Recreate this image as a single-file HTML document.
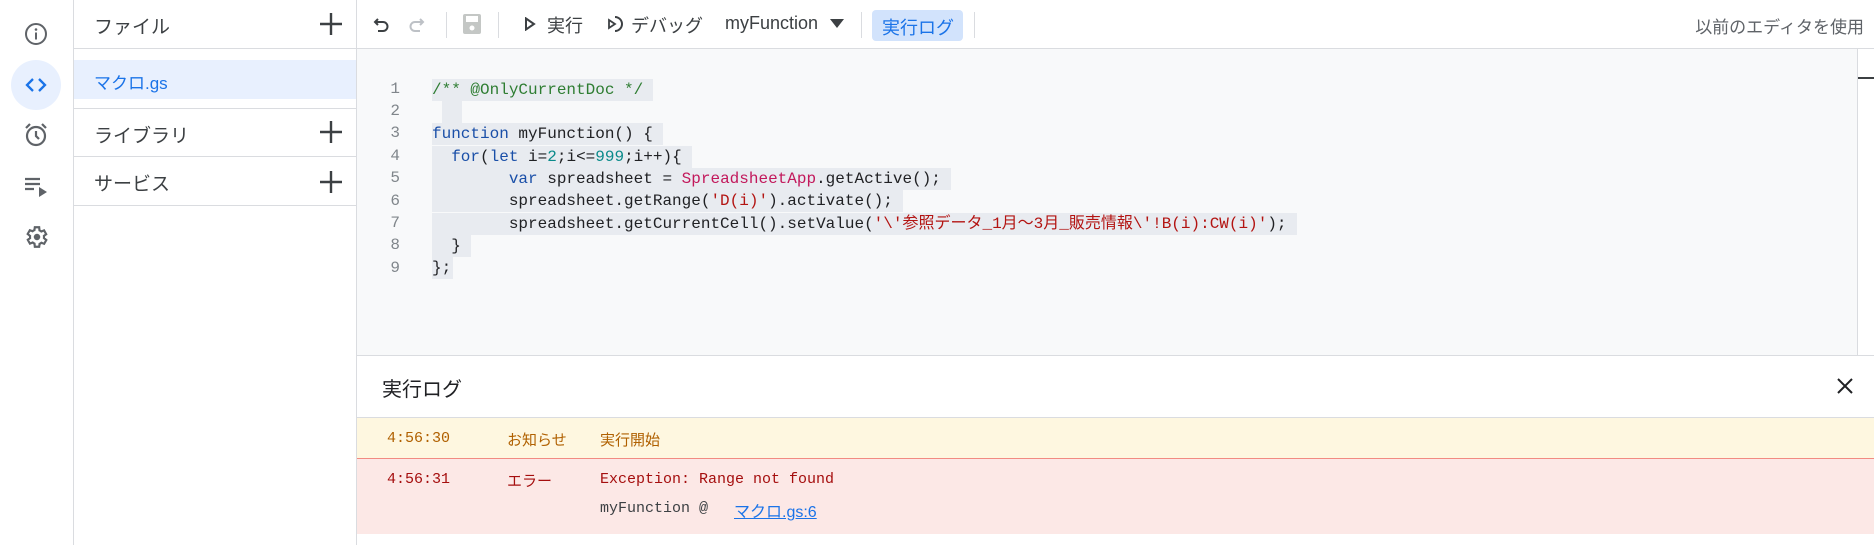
<!DOCTYPE html>
<html><head><meta charset="utf-8"><style>
*{box-sizing:border-box;margin:0;padding:0}
body{width:1874px;height:545px;overflow:hidden;background:#fff;font-family:"Liberation Sans","Noto Sans CJK JP",sans-serif;position:relative;color:#3c4043}
.abs{position:absolute}
.mono{font-family:"Liberation Mono","Noto Sans CJK JP",monospace}
.ic{position:absolute;left:24px}
.row{position:absolute;left:74px;width:282px;border-bottom:1px solid #dadce0;font-size:19px;color:#3c4043}
.plus{position:absolute;left:320px}
.sep{position:absolute;top:12px;width:1px;height:26px;background:#dadce0}
.ln{position:absolute;left:380px;width:20px;text-align:right;font-size:16px;color:#80868b;font-family:"Liberation Mono",monospace}
.cl{position:absolute;left:432px;font-size:16px;line-height:22px;height:22px;white-space:pre;background:#e8ebf0;color:#202124;padding-right:10px}
.kw{color:#1a4fa8}.cm{color:#2e7d32}.st{color:#b31412}.nm{color:#0a8a8a}.cls{color:#c2185b}
</style></head><body>
<!-- rail -->
<div class="abs" style="left:73px;top:0;width:1px;height:545px;background:#dadce0"></div>
<svg class="ic" style="top:22px" width="24" height="24" viewBox="0 0 24 24"><circle cx="12" cy="12" r="10" fill="none" stroke="#5f6368" stroke-width="2"/><rect x="11" y="10.5" width="2" height="7" fill="#5f6368"/><circle cx="12" cy="7.5" r="1.3" fill="#5f6368"/></svg>
<div class="abs" style="left:11px;top:60px;width:50px;height:50px;border-radius:50%;background:#e8f0fe"></div>
<svg class="ic" style="top:73px" width="24" height="24" viewBox="0 0 24 24"><path d="M9 6l-6 6 6 6M15 6l6 6-6 6" fill="none" stroke="#1a73e8" stroke-width="2.3"/></svg>
<svg class="ic" style="top:122px" width="24" height="26" viewBox="0 0 24 26"><circle cx="12" cy="14" r="9" fill="none" stroke="#5f6368" stroke-width="2.2"/><path d="M12 9v5l3 3M2 6l4-4M22 6l-4-4" fill="none" stroke="#5f6368" stroke-width="2.2"/></svg>
<svg class="ic" style="top:175px" width="26" height="24" viewBox="0 0 26 24"><path d="M1 4h15M1 9h15M1 14h9" stroke="#5f6368" stroke-width="2.2"/><path d="M15 12l8 5-8 5z" fill="#5f6368"/></svg>
<svg class="ic" style="top:224px" width="26" height="26" viewBox="0 0 24 24"><path d="M19.4 13a7.5 7.5 0 000-2l2.1-1.6-2-3.5-2.5 1a7 7 0 00-1.7-1L15 3h-4l-.4 2.7a7 7 0 00-1.7 1l-2.5-1-2 3.5L6.6 11a7.5 7.5 0 000 2l-2.1 1.6 2 3.5 2.5-1a7 7 0 001.7 1L11 21h4l.4-2.7a7 7 0 001.7-1l2.5 1 2-3.5z" transform="translate(-1 0)" fill="none" stroke="#5f6368" stroke-width="2"/><circle cx="12" cy="12" r="3" fill="#5f6368"/></svg>
<!-- files panel -->
<div class="abs" style="left:356px;top:0;width:1px;height:545px;background:#dadce0"></div>
<div class="row" style="top:0;height:49px"><span class="abs" style="left:20px;top:12px">ファイル</span></div>
<svg class="abs" style="left:320px;top:13px" width="22" height="22"><path d="M11 0v22M0 11h22" stroke="#3c4043" stroke-width="2.4"/></svg>
<div class="abs" style="left:74px;top:60px;width:282px;height:39px;background:#e8f0fe;color:#1a73e8;font-size:17px;padding:9px 0 0 20px">マクロ.gs</div>
<div class="row" style="top:108px;height:49px;border-top:1px solid #dadce0"><span class="abs" style="left:20px;top:12px">ライブラリ</span></div>
<svg class="abs" style="left:320px;top:121px" width="22" height="22"><path d="M11 0v22M0 11h22" stroke="#3c4043" stroke-width="2.4"/></svg>
<div class="row" style="top:157px;height:49px"><span class="abs" style="left:20px;top:12px">サービス</span></div>
<svg class="abs" style="left:320px;top:171px" width="22" height="22"><path d="M11 0v22M0 11h22" stroke="#3c4043" stroke-width="2.4"/></svg>
<!-- toolbar -->
<div class="abs" style="left:357px;top:48px;width:1517px;height:1px;background:#dadce0"></div>
<svg class="abs" style="left:372px;top:14px" width="20" height="20" viewBox="0 0 20 20"><path d="M6 5L3 8l3 3M3 8h8a4.5 4.5 0 010 9H6" fill="none" stroke="#3c4043" stroke-width="2"/></svg>
<svg class="abs" style="left:406px;top:14px" width="20" height="20" viewBox="0 0 20 20"><path d="M14 5l3 3-3 3M17 8H9a4.5 4.5 0 000 9h5" fill="none" stroke="#bdc1c6" stroke-width="2"/></svg>
<div class="sep" style="left:446px"></div>
<svg class="abs" style="left:462px;top:13px" width="20" height="22" viewBox="0 0 20 22"><rect x="1" y="1" width="18" height="20" rx="2" fill="#c4c7c5"/><rect x="4" y="3" width="12" height="6" fill="#fff"/><circle cx="10" cy="15" r="2.5" fill="#fff"/></svg>
<div class="sep" style="left:498px"></div>
<svg class="abs" style="left:524px;top:17px" width="12" height="14" viewBox="0 0 12 14"><path d="M2 1.5l8 5.5-8 5.5z" fill="none" stroke="#3c4043" stroke-width="2"/></svg>
<span class="abs" style="left:547px;top:12px;font-size:18px">実行</span>
<svg class="abs" style="left:607px;top:14px" width="20" height="20" viewBox="0 0 20 20"><path d="M8 3a7 7 0 110 14" fill="none" stroke="#3c4043" stroke-width="2"/><path d="M2 6l6 4-6 4z" fill="none" stroke="#3c4043" stroke-width="1.8"/></svg>
<span class="abs" style="left:631px;top:12px;font-size:18px">デバッグ</span>
<span class="abs" style="left:725px;top:13px;font-size:18px;color:#3c4043">myFunction</span>
<svg class="abs" style="left:830px;top:19px" width="14" height="10"><path d="M0 0h14L7 9z" fill="#3c4043"/></svg>
<div class="sep" style="left:861px"></div>
<div class="abs" style="left:872px;top:10px;width:91px;height:31px;background:#d2e3fc;border-radius:4px;color:#1a73e8;font-size:18px;padding:4px 0 0 10px">実行ログ</div>
<div class="sep" style="left:974px"></div>
<span class="abs" style="right:10px;top:13px;font-size:17px;color:#5f6368">以前のエディタを使用</span>
<!-- editor -->
<div class="abs" style="left:357px;top:49px;width:1501px;height:306px;background:#f8f9fa"></div>
<div class="abs" style="left:1857px;top:49px;width:1px;height:306px;background:#dadce0"></div>
<div class="abs" style="left:1858px;top:77px;width:16px;height:2px;background:#3c4043"></div>
<div class="ln" style="top:80px">1</div><div class="ln" style="top:102px">2</div><div class="ln" style="top:124px">3</div><div class="ln" style="top:147px">4</div><div class="ln" style="top:169px">5</div><div class="ln" style="top:192px">6</div><div class="ln" style="top:214px">7</div><div class="ln" style="top:236px">8</div><div class="ln" style="top:259px">9</div>
<div class="cl mono" style="top:79px"><span class="cm">/** @OnlyCurrentDoc */</span></div>
<div class="cl mono" style="top:101px;left:442px;width:20px"> </div>
<div class="cl mono" style="top:123px"><span class="kw">function</span> myFunction() {</div>
<div class="cl mono" style="top:146px">  <span class="kw">for</span>(<span class="kw">let</span> i=<span class="nm">2</span>;i&lt;=<span class="nm">999</span>;i++){</div>
<div class="cl mono" style="top:168px">        <span class="kw">var</span> spreadsheet = <span class="cls">SpreadsheetApp</span>.getActive();</div>
<div class="cl mono" style="top:190px">        spreadsheet.getRange(<span class="st">'D(i)'</span>).activate();</div>
<div class="cl mono" style="top:213px">        spreadsheet.getCurrentCell().setValue(<span class="st">'\'参照データ_1月～3月_販売情報\'!B(i):CW(i)'</span>);</div>
<div class="cl mono" style="top:235px">  }</div>
<div class="cl mono" style="top:257px;padding-right:2px">};</div>
<!-- log -->
<div class="abs" style="left:357px;top:355px;width:1517px;height:1px;background:#dadce0"></div>
<span class="abs" style="left:382px;top:373px;font-size:20px;color:#202124">実行ログ</span>
<svg class="abs" style="left:1836px;top:377px" width="18" height="18" viewBox="0 0 18 18"><path d="M2 2l14 14M16 2L2 16" stroke="#202124" stroke-width="2"/></svg>
<div class="abs" style="left:357px;top:417px;width:1517px;height:41px;background:#fef7e0;border-top:1px solid #dadce0"></div>
<div class="abs" style="left:357px;top:458px;width:1517px;height:76px;background:#fce8e6;border-top:1px solid #f28b82"></div>
<span class="abs mono" style="left:387px;top:430px;font-size:15px;color:#b06000">4:56:30</span>
<span class="abs" style="left:507px;top:429px;font-size:15px;color:#b06000">お知らせ</span>
<span class="abs" style="left:600px;top:429px;font-size:15px;color:#b06000">実行開始</span>
<span class="abs mono" style="left:387px;top:471px;font-size:15px;color:#a50e0e">4:56:31</span>
<span class="abs" style="left:507px;top:470px;font-size:15px;color:#a50e0e">エラー</span>
<span class="abs mono" style="left:600px;top:471px;font-size:15px;color:#a50e0e">Exception: Range not found</span>
<span class="abs mono" style="left:600px;top:500px;font-size:15px;color:#3c4043">myFunction  @</span>
<span class="abs" style="left:734px;top:498px;font-size:16px;color:#1a73e8;text-decoration:underline">マクロ.gs:6</span>
</body></html>
